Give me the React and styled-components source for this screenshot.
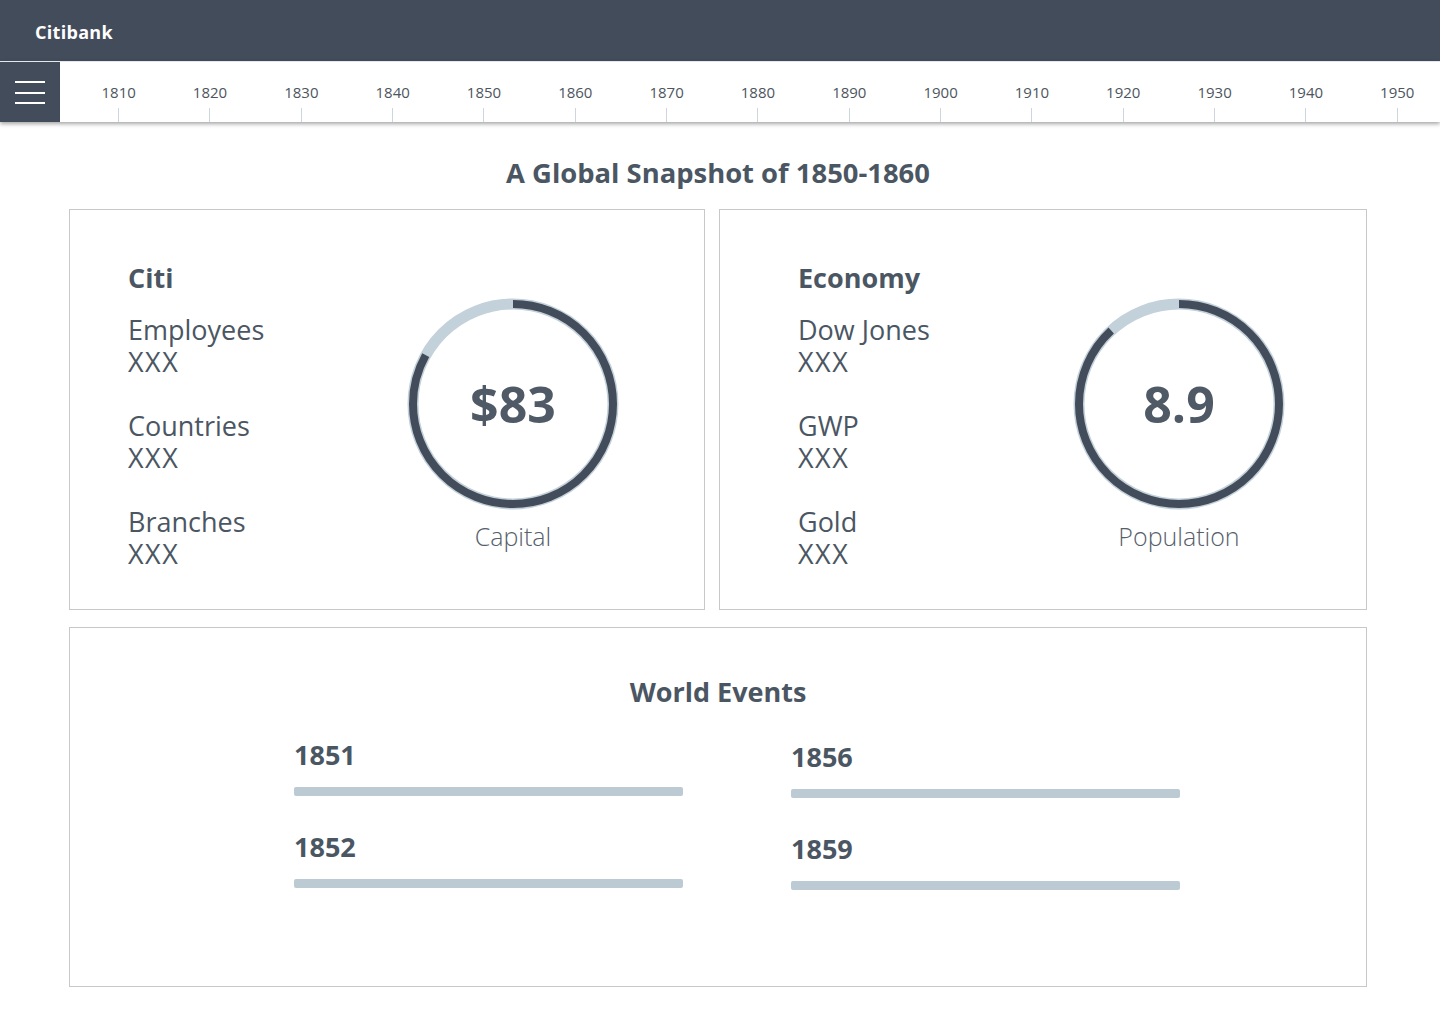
import React from 'react'
import styled, {createGlobalStyle} from 'styled-components'

const DARK = '#434c5b'
const TEXT = '#4b5663'
const LIGHT = '#bccad3'

const GlobalStyle = createGlobalStyle`
  body {
    margin: 0;
    background: #fff;
    font-family: "Open Sans", "Noto Sans", sans-serif;
    color: ${TEXT};
  }
  * { box-sizing: border-box; }
`

const years = [1810, 1820, 1830, 1840, 1850, 1860, 1870, 1880, 1890, 1900, 1910, 1920, 1930, 1940, 1950]

const Ring = ({value, label, percent}) => {
  const r = 100
  const c = 2 * Math.PI * r
  return (
    <RingBox>
      <RingWrap>
        <svg width="212" height="212" viewBox="0 0 212 212">
          <circle cx="106" cy="106" r={r} fill="none" stroke="#c3d1da" strokeWidth="11" />
          <circle
            cx="106" cy="106" r={r} fill="none" stroke={DARK} strokeWidth="8"
            strokeDasharray={`${c * percent / 100} ${c}`}
            transform="rotate(-90 106 106)"
          />
        </svg>
        <RingValue>{value}</RingValue>
      </RingWrap>
      <RingLabel>{label}</RingLabel>
    </RingBox>
  )
}

const Stat = ({name}) => (
  <StatItem>
    {name}<br /><Placeholder>XXX</Placeholder>
  </StatItem>
)

const Event = ({year, shift}) => (
  <EventItem shift={shift}>
    <EventYear>{year}</EventYear>
    <EventBar />
  </EventItem>
)

const App = () => {
  return (
    <>
      <GlobalStyle />
      <Header>
        <Brand>Citibank</Brand>
      </Header>
      <Timeline>
        <MenuButton>
          <span /><span /><span />
        </MenuButton>
        <Years>
          {years.map(y => (
            <Year key={y}>
              <YearLabel>{y}</YearLabel>
              <Tick />
            </Year>
          ))}
        </Years>
      </Timeline>
      <Main>
        <Title>A Global Snapshot of 1850-1860</Title>
        <Cards>
          <Card pl={58}>
            <StatCol width={279}>
              <CardHeading>Citi</CardHeading>
              <Stat name="Employees" />
              <Stat name="Countries" />
              <Stat name="Branches" />
            </StatCol>
            <Ring value="$83" label="Capital" percent={83} />
          </Card>
          <Card pl={78}>
            <StatCol width={275}>
              <CardHeading>Economy</CardHeading>
              <Stat name="Dow Jones" />
              <Stat name="GWP" />
              <Stat name="Gold" />
            </StatCol>
            <Ring value="8.9" label="Population" percent={88} />
          </Card>
        </Cards>
        <EventsCard>
          <EventsTitle>World Events</EventsTitle>
          <EventsGrid>
            <Event year="1851" />
            <Event year="1856" shift={2} />
            <Event year="1852" />
            <Event year="1859" shift={2} />
          </EventsGrid>
        </EventsCard>
      </Main>
    </>
  )
}

const Header = styled.header`
  height: 61px;
  background: ${DARK};
  display: flex;
  align-items: center;
  padding: 3px 0 0 35px;
`

const Brand = styled.div`
  color: #fff;
  font-weight: 700;
  font-size: 18px;
  letter-spacing: 0.3px;
`

const Timeline = styled.nav`
  height: 61px;
  display: flex;
  background: #fff;
  border-top: 1px solid #e4e8ec;
  box-shadow: 0 2px 4px rgba(0, 0, 0, 0.35);
  position: relative;
  z-index: 2;
`

const MenuButton = styled.div`
  width: 60px;
  background: ${DARK};
  display: flex;
  flex-direction: column;
  justify-content: center;
  align-items: center;
  gap: 8.5px;
  padding-top: 1px;

  span {
    display: block;
    width: 30px;
    height: 2px;
    background: #fff;
  }
`

const Years = styled.div`
  flex: 1;
  display: flex;
  padding-left: 13px;
  overflow: hidden;
`

const Year = styled.div`
  flex: 0 0 91.33px;
  display: flex;
  flex-direction: column;
  align-items: center;
  justify-content: flex-end;
`

const YearLabel = styled.span`
  font-size: 15px;
  color: #4d5560;
  line-height: 20px;
  margin-bottom: 6px;
`

const Tick = styled.span`
  width: 1px;
  height: 14px;
  background: #cdd6dd;
`

const Main = styled.main`
  padding: 35px 73px 0 69px;
`

const Title = styled.h1`
  margin: 0 0 20px;
  text-align: center;
  font-size: 27.4px;
  line-height: 32px;
  font-weight: 700;
  color: ${TEXT};
`

const Cards = styled.div`
  display: grid;
  grid-template-columns: 636px 1fr;
  gap: 14px;
`

const Card = styled.section`
  height: 401px;
  border: 1px solid #c8c8c8;
  display: flex;
  align-items: flex-start;
  padding: 52px 0 0 ${p => p.pl}px;
`

const StatCol = styled.div`
  width: ${p => p.width}px;
  display: flex;
  flex-direction: column;
  gap: 32px;
`

const CardHeading = styled.h2`
  margin: 0 0 -12px;
  font-size: 27px;
  line-height: 32px;
  font-weight: 700;
  color: ${TEXT};
`

const StatItem = styled.div`
  font-size: 27px;
  line-height: 32px;
  color: ${TEXT};
`

const Placeholder = styled.span`
  letter-spacing: 1.5px;
`

const RingBox = styled.div`
  width: 212px;
  margin-top: 36px;
  display: flex;
  flex-direction: column;
  align-items: center;
`

const RingWrap = styled.div`
  position: relative;
  width: 212px;
  height: 212px;

  svg { display: block; }
`

const RingValue = styled.div`
  position: absolute;
  inset: 0;
  display: flex;
  align-items: center;
  justify-content: center;
  font-size: 50px;
  font-weight: 700;
  color: #4f5a66;
`

const RingLabel = styled.div`
  margin-top: 10px;
  font-size: 25px;
  line-height: 32px;
  font-weight: 300;
  color: #56606b;
`

const EventsCard = styled.section`
  margin-top: 17px;
  height: 360px;
  border: 1px solid #c8c8c8;
  padding-top: 48px;
`

const EventsTitle = styled.h2`
  margin: 0 0 31px;
  text-align: center;
  font-size: 27px;
  line-height: 32px;
  font-weight: 700;
  color: ${TEXT};
`

const EventsGrid = styled.div`
  display: grid;
  grid-template-columns: 389px 389px;
  column-gap: 108px;
  row-gap: 35px;
  padding-left: 224px;
`

const EventItem = styled.div`
  display: flex;
  flex-direction: column;
  gap: 16px;
  transform: translateY(${p => p.shift || 0}px);
`

const EventYear = styled.span`
  font-size: 27px;
  line-height: 32px;
  font-weight: 700;
  color: ${TEXT};
`

const EventBar = styled.div`
  height: 9px;
  border-radius: 2px;
  background: ${LIGHT};
`

export default App
